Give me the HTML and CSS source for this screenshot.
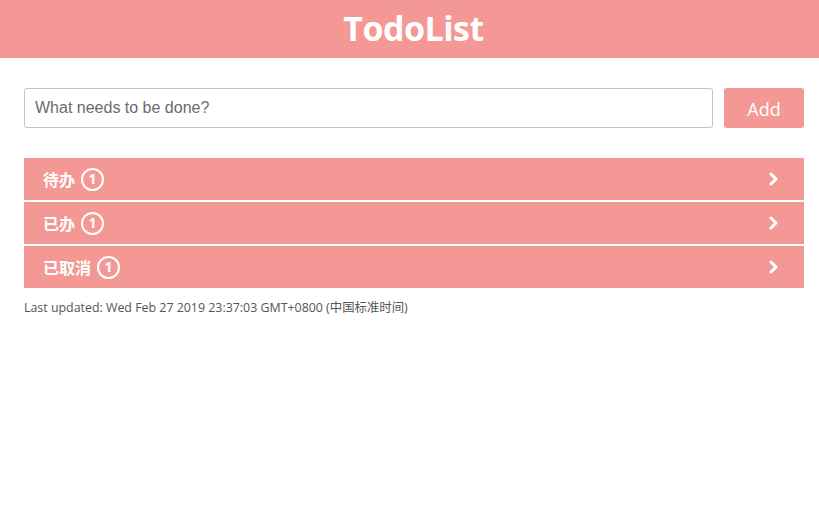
FILE: index.html
```html
<!DOCTYPE html>
<html>
<head>
<meta charset="utf-8">
<link rel="stylesheet" href="styles.css">
</head>
<body>
<header class="header"><h1 class="title">TodoList</h1></header>
<main class="main">
  <div class="add-row">
    <input class="todo-input" type="text" placeholder="What needs to be done?">
    <button class="add-btn">Add</button>
  </div>
  <ul class="groups">
    <li class="group"><span class="group-name">待办</span><span class="badge">1</span><svg class="chevron" width="12" height="14" viewBox="0 0 12 14"><path d="M3 2 L8 7 L3 12" fill="none" stroke="#fff" stroke-width="3" stroke-linecap="round" stroke-linejoin="round"/></svg></li>
    <li class="group"><span class="group-name">已办</span><span class="badge">1</span><svg class="chevron" width="12" height="14" viewBox="0 0 12 14"><path d="M3 2 L8 7 L3 12" fill="none" stroke="#fff" stroke-width="3" stroke-linecap="round" stroke-linejoin="round"/></svg></li>
    <li class="group"><span class="group-name">已取消</span><span class="badge">1</span><svg class="chevron" width="12" height="14" viewBox="0 0 12 14"><path d="M3 2 L8 7 L3 12" fill="none" stroke="#fff" stroke-width="3" stroke-linecap="round" stroke-linejoin="round"/></svg></li>
  </ul>
  <p class="updated">Last updated: Wed Feb 27 2019 23:37:03 GMT+0800 (中国标准时间)</p>
</main>
</body>
</html>
```
FILE: styles.css
```css
* { box-sizing: border-box; }
body {
  margin: 0;
  font-family: "Open Sans", "Noto Sans CJK SC", sans-serif;
  background: #fff;
}
.header {
  background: #f39894;
  height: 58px;
  display: flex;
  align-items: center;
  justify-content: center;
  padding-left: 8px;
  padding-bottom: 2px;
}
.title {
  margin: 0;
  color: #fff;
  font-size: 34px;
  font-weight: 700;
  line-height: 1;
  letter-spacing: -0.5px;
}
.main {
  padding: 30px 15px 0 24px;
}
.add-row {
  display: flex;
  gap: 11px;
  height: 40px;
}
.todo-input {
  flex: 1;
  height: 40px;
  border: 1px solid #bcc6d3;
  border-radius: 3px;
  padding: 0 10px;
  font-family: "Liberation Sans", Arial, sans-serif;
  font-size: 16px;
  color: #333;
  outline: none;
}
.todo-input::placeholder { color: #6b6b6b; }
.add-btn {
  width: 80px;
  height: 40px;
  border: none;
  border-radius: 3px;
  background: #f39894;
  color: #fff;
  font-family: "Open Sans", sans-serif;
  font-size: 18px;
  padding: 0;
  padding-top: 2px;
}
.groups {
  list-style: none;
  margin: 30px 0 0;
  padding: 0;
  display: flex;
  flex-direction: column;
  gap: 2px;
}
.group {
  background: #f39894;
  height: 42px;
  display: flex;
  align-items: center;
  padding: 0 24px 0 19px;
  color: #fff;
}
.group-name {
  font-family: "Noto Sans CJK SC", sans-serif;
  font-size: 16px;
  font-weight: 700;
}
.badge {
  margin-left: 6px;
  width: 23px;
  height: 23px;
  border: 2px solid #fff;
  border-radius: 50%;
  display: flex;
  align-items: center;
  justify-content: center;
  font-size: 14px;
  font-weight: 700;
  line-height: 1;
}
.chevron { margin-left: auto; }
.updated {
  margin: 10px 0 0;
  font-size: 12.4px;
  color: #555;
  font-family: "Open Sans", "Noto Sans CJK SC", sans-serif;
}
```
